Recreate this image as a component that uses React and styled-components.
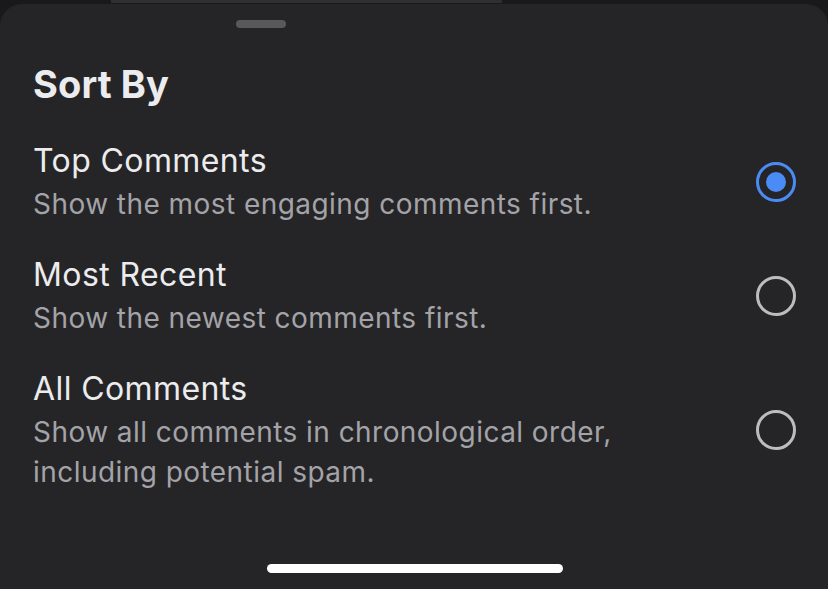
import styled, { createGlobalStyle } from "styled-components";

const Global = createGlobalStyle`
  html, body {
    margin: 0;
    padding: 0;
    background: #19191b;
    height: 100%;
  }
  #root {
    height: 100%;
  }
`;

const Screen = styled.div`
  height: 589px;
  display: flex;
  flex-direction: column;
  overflow: hidden;
  font-family: Inter, "Noto Sans", sans-serif;
  -webkit-font-smoothing: antialiased;
`;

const Peek = styled.div`
  height: 3px;
  width: 391px;
  margin-left: 111px;
  background: #2f2f31;
  flex-shrink: 0;
`;

const Sheet = styled.div`
  flex: 1;
  margin-top: 1px;
  background: #252527;
  border-radius: 22px 22px 0 0;
  padding: 16px 32px 0 33px;
  display: flex;
  flex-direction: column;
`;

const Handle = styled.div`
  width: 50px;
  height: 8px;
  border-radius: 4px;
  background: #59595c;
  margin-left: 203px;
`;

const Title = styled.h1`
  margin: 33px 0 0;
  font-size: 38px;
  line-height: 46px;
  font-weight: 700;
  color: #ececee;
  letter-spacing: 0.1px;
`;

const List = styled.div`
  margin-top: 33px;
  display: flex;
  flex-direction: column;
  gap: 30px;
`;

const Row = styled.div`
  display: flex;
  align-items: center;
  justify-content: space-between;
`;

const Text = styled.div`
  display: flex;
  flex-direction: column;
`;

const Label = styled.div`
  font-size: 32px;
  line-height: 42px;
  font-weight: 400;
  color: #ececee;
  letter-spacing: 0.4px;
`;

const Desc = styled.div`
  margin-top: 2px;
  font-size: 28px;
  line-height: 40px;
  color: #a3a3a8;
  letter-spacing: 0.45px;
`;

const Radio = styled.div`
  width: 40px;
  height: 40px;
  box-sizing: border-box;
  border-radius: 50%;
  border: 3px solid ${(p) => (p.checked ? "#4a8bf5" : "#bdbdc0")};
  display: flex;
  align-items: center;
  justify-content: center;
  flex-shrink: 0;

  &::after {
    content: "";
    width: 20px;
    height: 20px;
    border-radius: 50%;
    background: #4a8bf5;
    display: ${(p) => (p.checked ? "block" : "none")};
  }
`;

const HomeBar = styled.div`
  margin: auto auto 16px;
  width: 296px;
  height: 9px;
  border-radius: 5px;
  background: #ffffff;
`;

const options = [
  {
    label: "Top Comments",
    desc: ["Show the most engaging comments first."],
    checked: true,
  },
  { label: "Most Recent", desc: ["Show the newest comments first."] },
  {
    label: "All Comments",
    desc: ["Show all comments in chronological order,", "including potential spam."],
  },
];

export default function App() {
  return (
    <Screen>
      <Global />
      <Peek />
      <Sheet>
        <Handle />
        <Title>Sort By</Title>
        <List>
          {options.map((o) => (
            <Row key={o.label}>
              <Text>
                <Label>{o.label}</Label>
                <Desc>
                  {o.desc.map((line, i) => (
                    <div key={i}>{line}</div>
                  ))}
                </Desc>
              </Text>
              <Radio checked={o.checked} />
            </Row>
          ))}
        </List>
        <HomeBar />
      </Sheet>
    </Screen>
  );
}
